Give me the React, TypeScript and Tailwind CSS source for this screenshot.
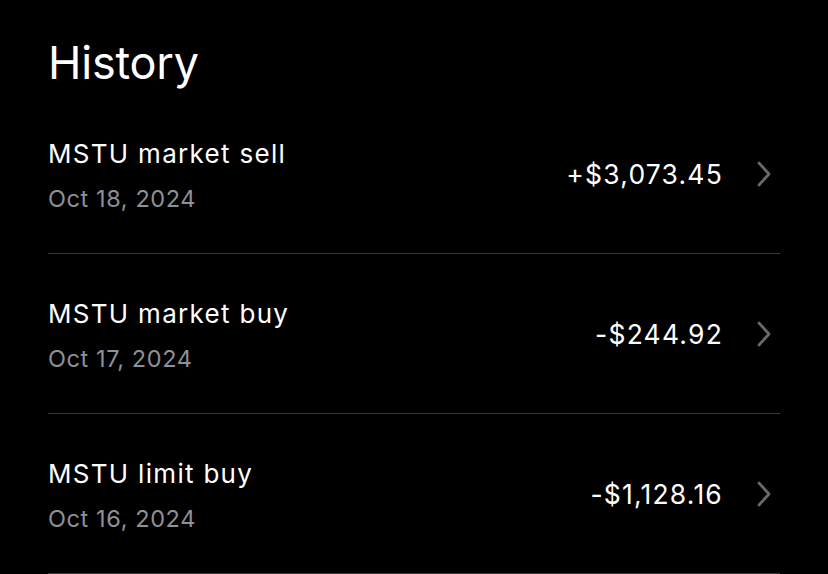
const rows = [
  { title: "MSTU market sell", date: "Oct 18, 2024", amount: "+$3,073.45" },
  { title: "MSTU market buy", date: "Oct 17, 2024", amount: "-$244.92" },
  { title: "MSTU limit buy", date: "Oct 16, 2024", amount: "-$1,128.16" },
];

function Chevron() {
  return (
    <svg width="16" height="26" viewBox="0 0 16 26" fill="none" className="ml-[33px]">
      <path d="M3 2 L13 13 L3 24" stroke="#66696e" strokeWidth="2.8" strokeLinecap="round" strokeLinejoin="round" />
    </svg>
  );
}

export default function App() {
  return (
    <div
      className="w-[828px] h-[574px] bg-black text-white overflow-hidden pl-[48px] pr-[48px]"
      style={{ fontFamily: "Inter, 'Noto Sans', sans-serif" }}
    >
      <div className="h-[94px] pt-[34px]">
        <h1 className="text-[45px] leading-[58px] font-normal tracking-[-0.2px]">History</h1>
      </div>
      {rows.map((r) => (
        <div key={r.date} className="h-[160px] border-b border-[#3a3a3c] flex items-center justify-between">
          <div className="pt-[6px] flex flex-col">
            <span className="text-[26px] leading-[32px] tracking-[1.3px]">{r.title}</span>
            <span className="mt-[13px] text-[23.5px] leading-[32px] tracking-[0.6px] text-[#8c9098]">{r.date}</span>
          </div>
          <div className="flex items-center pr-[8px]">
            <span className="text-[26.5px] leading-[32px] tracking-[1.2px]">{r.amount}</span>
            <Chevron />
          </div>
        </div>
      ))}
    </div>
  );
}
